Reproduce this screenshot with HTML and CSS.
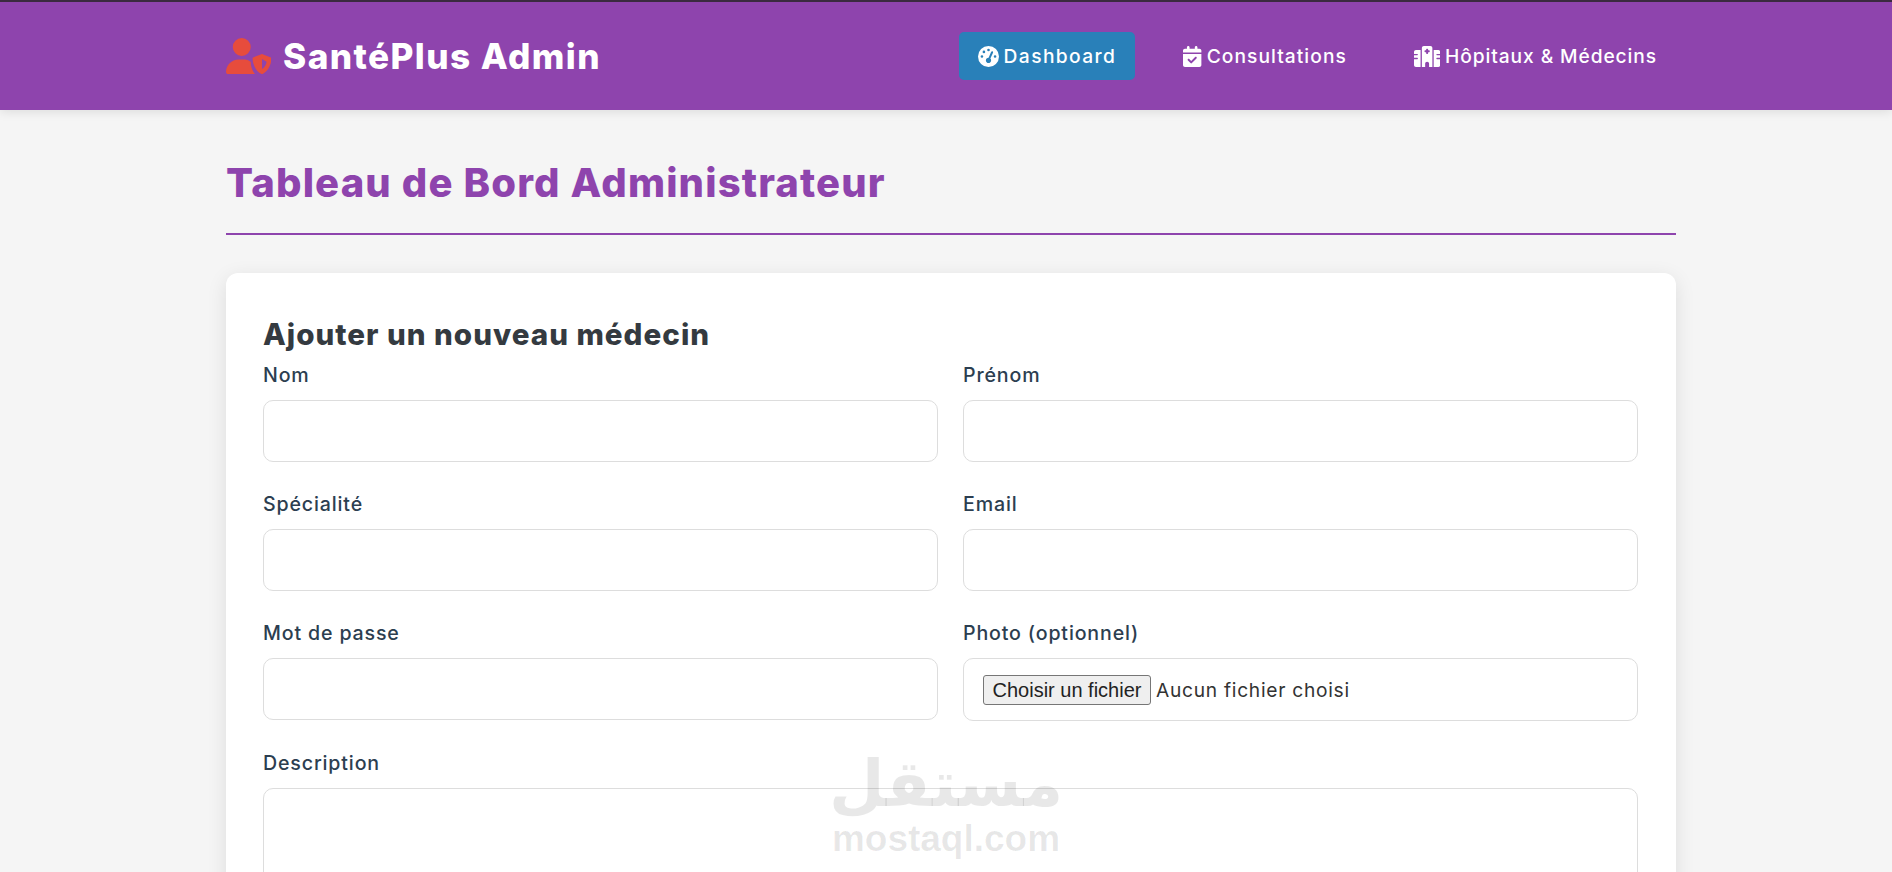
FILE: index.html
```html
<!DOCTYPE html>
<html lang="fr">
<head>
<meta charset="utf-8">
<title>SantéPlus Admin</title>
<link rel="stylesheet" href="styles.css">
</head>
<body>
<header class="topbar">
  <div class="topbar-inner">
    <a class="brand" href="#">
      <svg class="brand-icon" viewBox="0 0 640 512" aria-hidden="true"><path d="M224 256A128 128 0 1 0 224 0a128 128 0 1 0 0 256zM178.300 304C79.800 304 0 383.800 0 482.300C0 498.700 13.300 512 29.700 512H412C384 475 352 420 352 340C330 318 300 304 269.700 304Z"/><path fill-rule="evenodd" d="M512 228c-3 0-5 .5-8 1.500l-118 47c-5 2-8 6-8 11c0 80 42 185 126 224c5 2 11 2 16 0c84-39 126-144 126-224c0-5-3-9-8-11l-118-47c-3-1-5-1.500-8-1.500zM512 299v142c34-18 60-58 66-103z"/></svg>
      <span>SantéPlus Admin</span>
    </a>
    <nav class="nav">
      <a class="nav-link active" href="#">
        <svg class="nav-icon" viewBox="0 0 512 512" aria-hidden="true"><path d="M0 256a256 256 0 1 1 512 0A256 256 0 1 1 0 256zM288 96a32 32 0 1 0 -64 0 32 32 0 1 0 64 0zM256 416c35.300 0 64-28.700 64-64c0-17.400-6.900-33.100-18.100-44.600L366 161.700c5.300-12.100-.2-26.300-12.300-31.600s-26.300 .2-31.600 12.300L257.900 288c-.6 0-1.300 0-1.900 0c-35.300 0-64 28.700-64 64s28.700 64 64 64zM176 144a32 32 0 1 0 -64 0 32 32 0 1 0 64 0zM96 288a32 32 0 1 0 0-64 32 32 0 1 0 0 64zm352-32a32 32 0 1 0 -64 0 32 32 0 1 0 64 0z"/></svg>
        <span class="nav-text-dashboard">Dashboard</span>
      </a>
      <a class="nav-link" href="#">
        <svg class="nav-icon" viewBox="0 0 448 512" aria-hidden="true"><path d="M128 0c17.700 0 32 14.300 32 32V64H288V32c0-17.700 14.300-32 32-32s32 14.300 32 32V64h48c26.500 0 48 21.500 48 48v48H0V112C0 85.500 21.500 64 48 64H96V32c0-17.700 14.300-32 32-32zM0 192H448V464c0 26.500-21.500 48-48 48H48c-26.500 0-48-21.500-48-48V192zM329 305c9.400-9.400 9.400-24.600 0-33.900s-24.600-9.400-33.900 0l-95 95-47-47c-9.400-9.400-24.600-9.400-33.900 0s-9.400 24.600 0 33.900l64 64c9.400 9.400 24.600 9.400 33.900 0L329 305z"/></svg>
        <span class="nav-text-consult">Consultations</span>
      </a>
      <a class="nav-link" href="#">
        <svg class="nav-icon" viewBox="0 0 640 512" aria-hidden="true"><path d="M192 48c0-26.500 21.500-48 48-48H400c26.500 0 48 21.500 48 48V512H368V432c0-26.500-21.500-48-48-48s-48 21.500-48 48v80H192V48zM48 96H160V512H48c-26.500 0-48-21.500-48-48V320H80c8.800 0 16-7.200 16-16s-7.200-16-16-16H0V224H80c8.800 0 16-7.200 16-16s-7.200-16-16-16H0V144c0-26.500 21.500-48 48-48zm544 0c26.500 0 48 21.500 48 48v48H560c-8.800 0-16 7.200-16 16s7.200 16 16 16h80v64H560c-8.800 0-16 7.200-16 16s7.200 16 16 16h80V464c0 26.500-21.500 48-48 48H480V96H592zM312 64c-8.800 0-16 7.200-16 16v24H272c-8.800 0-16 7.200-16 16v16c0 8.800 7.200 16 16 16h24v24c0 8.800 7.200 16 16 16h16c8.800 0 16-7.200 16-16V152h24c8.800 0 16-7.200 16-16V120c0-8.800-7.200-16-16-16H344V80c0-8.800-7.200-16-16-16H312z"/></svg>
        <span class="nav-text-hospital">Hôpitaux &amp; Médecins</span>
      </a>
    </nav>
  </div>
</header>

<main class="page">
  <h1 class="page-title">Tableau de Bord Administrateur</h1>
  <section class="card">
    <h2 class="card-title">Ajouter un nouveau médecin</h2>
    <form class="form-grid">
      <div class="field"><label class="field-label">Nom</label><input class="control" type="text"></div>
      <div class="field"><label class="field-label">Prénom</label><input class="control" type="text"></div>
      <div class="field"><label class="field-label">Spécialité</label><input class="control" type="text"></div>
      <div class="field"><label class="field-label">Email</label><input class="control" type="text"></div>
      <div class="field"><label class="field-label">Mot de passe</label><input class="control" type="password"></div>
      <div class="field">
        <label class="field-label">Photo (optionnel)</label>
        <div class="control file-control"><button class="file-button" type="button">Choisir un fichier</button><span class="file-name">Aucun fichier choisi</span></div>
      </div>
      <div class="field field-wide"><label class="field-label">Description</label><textarea class="control text-area"></textarea></div>
    </form>
  </section>
</main>

<div class="watermark" aria-label="mostaql.com">
  <span class="wm-arabic" lang="ar" dir="rtl">مستقل</span>
  <span class="wm-latin">mostaql.com</span>
</div>
</body>
</html>
```
FILE: styles.css
```css
* { box-sizing: border-box; }
html, body { margin: 0; height: 872px; overflow: hidden; }
body {
  background: #f5f5f5;
  font-family: Inter, "Noto Sans", sans-serif;
  color: #2c3e50;
  border-top: 2px solid #3a2a3f;
  position: relative;
}
.topbar {
  height: 108px;
  background: #8e44ad;
  box-shadow: 0 2px 10px rgba(0,0,0,.1);
  position: relative;
}
.topbar-inner {
  width: 1450px;
  margin-left: 226px;
  height: 100%;
  display: flex;
  align-items: center;
  justify-content: space-between;
}
.brand {
  display: flex;
  align-items: center;
  gap: 12px;
  color: #fff;
  text-decoration: none;
  font-weight: 800;
  font-size: 35.2px;
  letter-spacing: 1.4px;
  line-height: 50px;
}
.brand-icon { width: 45px; height: 36px; fill: #e74c3c; }
.nav { display: flex; gap: 29px; }
.nav-link {
  display: flex;
  align-items: center;
  gap: 5px;
  height: 48px;
  padding: 0 19px;
  border-radius: 5px;
  color: #fff;
  text-decoration: none;
  font-weight: 500;
  font-size: 19.2px;
}
.nav-text-dashboard { letter-spacing: 1.4px; }
.nav-text-consult { letter-spacing: 1.05px; }
.nav-text-hospital { letter-spacing: .9px; }
.nav-link.active { background: #2980b9; }
.nav-icon { height: 21px; width: auto; fill: #fff; flex: none; }

.page { width: 1450px; margin-left: 226px; padding-top: 42px; }
.page-title {
  margin: 0 0 38px;
  height: 83px;
  padding-bottom: 19px;
  line-height: 62px;
  font-size: 40px;
  font-weight: 800;
  color: #8e44ad;
  border-bottom: 2px solid #8e44ad;
  letter-spacing: 1.15px;
}
.card {
  background: #fff;
  border-radius: 12px;
  padding: 37px;
  box-shadow: 0 5px 20px rgba(0,0,0,.1);
  height: 900px;
}
.card-title {
  margin: 0 0 1px;
  line-height: 48px;
  font-size: 29.6px;
  font-weight: 800;
  letter-spacing: 1px;
  color: #343a40;
}
.form-grid {
  display: grid;
  grid-template-columns: 675px 675px;
  column-gap: 25px;
  row-gap: 26px;
}
.field { display: flex; flex-direction: column; gap: 9px; }
.field-wide { grid-column: 1 / -1; }
.field-label { line-height: 32px; font-size: 19.6px; font-weight: 500; letter-spacing: .85px; color: #2c3e50; }
.control {
  display: block;
  width: 100%;
  height: 62px;
  border: 1px solid #ddd;
  border-radius: 10px;
  background: #fff;
  outline: none;
}
.file-control { display: flex; align-items: center; height: 63px; padding-left: 19px; }
.file-button {
  width: 168px;
  height: 30px;
  padding: 1px 0 0;
  background: #efefef;
  border: 1px solid #767676;
  border-radius: 3px;
  color: #222;
  font-family: "Liberation Sans", sans-serif;
  font-size: 20px;
  white-space: nowrap;
}
.file-name { margin-left: 5px; font-size: 19.2px; letter-spacing: .72px; color: #333; }
.text-area { height: 200px; resize: none; }

.watermark {
  position: absolute;
  left: 832px;
  top: 742px;
  width: 228px;
  display: flex;
  flex-direction: column;
  align-items: center;
  color: rgba(0,0,0,.09);
  font-weight: 700;
  pointer-events: none;
}
.wm-arabic { font-family: "DejaVu Sans", sans-serif; font-size: 64px; line-height: 80px; }
.wm-latin { font-family: "Liberation Sans", sans-serif; font-size: 37px; line-height: 30px; }
```
